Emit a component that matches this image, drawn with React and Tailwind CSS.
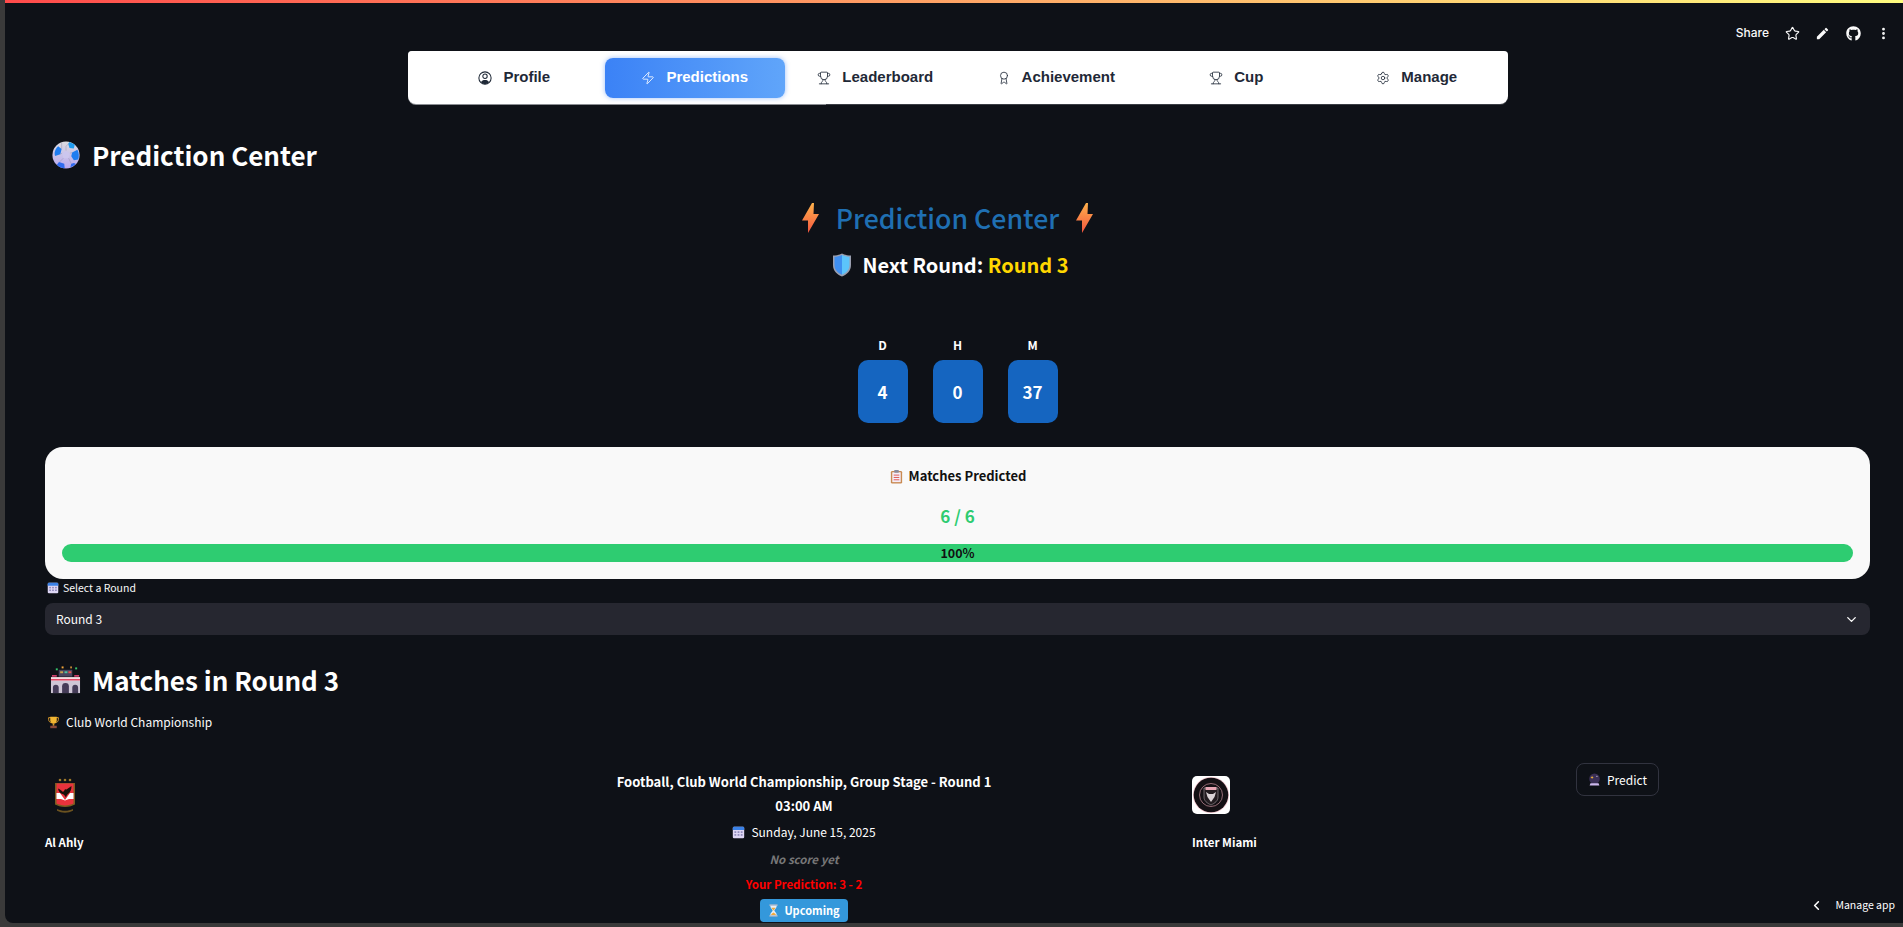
import React from "react";
import { Zap, Trophy, Award, Settings, Star, ChevronDown, ChevronLeft, EllipsisVertical } from "lucide-react";
import { FaGithub } from "react-icons/fa";
import { MdEdit } from "react-icons/md";

const Ball = ({ className }) => (
  <svg viewBox="0 0 32 32" className={className}>
    <defs>
      <linearGradient id="ballg" x1="0" y1="0" x2="0" y2="1">
        <stop offset="0" stopColor="#dcdce0" />
        <stop offset="1" stopColor="#b9a8f0" />
      </linearGradient>
    </defs>
    <circle cx="16" cy="16" r="15.500" fill="url(#ballg)" />
    <path d="M16 11l-4.500 3.200 1.700 5.400h5.600l1.700-5.400z" fill="#ccc6ee" />
    <path d="M7 6l4 3-1.500 6-6 2C2 13 4 9 7 6z" fill="#1f7df0" />
    <path d="M20 1l6 3-1 4.500-5-.5-1.500-5z" fill="#1f9cf0" />
    <path d="M23 13l6-3c2 3 2 8 1 11l-5 1-3-4.500z" fill="#1f7df0" />
    <path d="M8 24l6 2 .5 5c-3 0-6-1-9-4z" fill="#2f6bf0" />
    <path d="M22 26l3-1 2 1c-1.500 2-3 3-6 4z" fill="#2f6bf0" />
    <path d="M11 1.500L11 9M16 11v-5l3-3M11.500 14L9.500 15M20.500 14l2.500-1M13 19.600l-4.500 4.500M19 19.600l3 6.400" stroke="#8f8fa8" strokeWidth=".5" fill="none" />
  </svg>
);

const Bolt = ({ className, id }) => (
  <svg viewBox="0 0 17 30" className={className}>
    <defs>
      <linearGradient id={id} x1="0" y1="0" x2="0" y2="1">
        <stop offset="0" stopColor="#fdb14b" />
        <stop offset="1" stopColor="#f4553f" />
      </linearGradient>
    </defs>
    <path d="M10 0L0 17.500h6L6 30 17 11h-5.500L12 0z" fill={`url(#${id})`} />
  </svg>
);

const Shield = ({ className }) => (
  <svg viewBox="0 0 20 24" className={className}>
    <path d="M10 0.500C7 2 4 2.500 1 2.500V12c0 6 4 9.500 9 11.500 5-2 9-5.500 9-11.500V2.500C16 2.500 13 2 10 .5z" fill="#9a9fb0" />
    <path d="M10 2C7.500 3.200 5 3.700 2.500 3.800V12c0 5 3.500 8 7.500 9.800z" fill="#3f8ff0" />
    <path d="M10 2c2.500 1.200 5 1.700 7.500 1.800V12c0 5-3.500 8-7.500 9.800z" fill="#5cc4fb" />
  </svg>
);

const Calendar = ({ className }) => (
  <svg viewBox="0 0 16 16" className={className}>
    <rect x="1" y="1" width="14" height="14" rx="1.500" fill="#ded7f5" />
    <path d="M1 2.500A1.500 1.500 0 012.500 1h11A1.500 1.500 0 0115 2.500V5H1z" fill="#3b82e8" />
    <g fill="#8b86b8">
      <rect x="3" y="6.500" width="2.200" height="2" /><rect x="6.900" y="6.500" width="2.200" height="2" /><rect x="10.800" y="6.500" width="2.200" height="2" />
      <rect x="3" y="10" width="2.200" height="2" /><rect x="6.900" y="10" width="2.200" height="2" /><rect x="10.800" y="10" width="2.200" height="2" />
    </g>
  </svg>
);

const Clipboard = ({ className }) => (
  <svg viewBox="0 0 16 16" className={className}>
    <rect x="2" y="2" width="12" height="13.500" rx="1.500" fill="#c98a52" />
    <rect x="3.500" y="3.500" width="9" height="10.500" fill="#f4eef8" />
    <rect x="5.500" y="1" width="5" height="3" rx=".8" fill="#8a8a9c" />
    <g fill="#e0524f"><rect x="5" y="6" width="6" height="1" /><rect x="5" y="8.500" width="6" height="1" /><rect x="5" y="11" width="6" height="1" /></g>
  </svg>
);

const Stadium = ({ className }) => (
  <svg viewBox="0 0 32 28" className={className}>
    <g fill="#f0467a"><rect x="2" y="9" width="5" height="1.500" /><rect x="25" y="9" width="5" height="1.500" /></g>
    <g fill="#35c46a"><rect x="6" y="2" width="2" height="2" /><rect x="26" y="1" width="2" height="2" /></g>
    <g fill="#f2a53a"><rect x="12" y="0" width="2" height="2" /><rect x="21" y="0" width="1.500" height="2" /></g>
    <rect x="9" y="3.500" width="14" height="7" fill="#4a4560" />
    <g fill="#c9a24c"><rect x="10.500" y="5" width="3" height="2" /></g>
    <g fill="#4cc3a0"><rect x="15" y="5" width="3" height="2" /></g>
    <g fill="#e8524f"><rect x="19" y="5" width="3" height="2" /></g>
    <rect x="1" y="11" width="30" height="4" fill="#f2dde2" />
    <rect x="1" y="13" width="30" height="1.500" fill="#e0405f" />
    <rect x="1" y="15" width="30" height="12.500" fill="#cfc7d6" />
    <g fill="#453c58">
      <path d="M3 27.500V22a3 3 0 016 0v5.500z" /><path d="M12.500 27.500V20.500a3.500 3.500 0 017 0v7z" /><path d="M23 27.500V22a3 3 0 016 0v5.500z" />
    </g>
  </svg>
);

const Cup = ({ className }) => (
  <svg viewBox="0 0 16 16" className={className}>
    <path d="M2 2h12v2c0 2.500-1.500 4-3.500 4.200M2 2v2c0 2.500 1.500 4 3.500 4.200" stroke="#d99a2b" strokeWidth="1.200" fill="none" />
    <path d="M4 1h8v4.500C12 8 10 9.500 8 9.500S4 8 4 5.500z" fill="#f2b632" />
    <rect x="7" y="9" width="2" height="3" fill="#d99a2b" />
    <rect x="4" y="12" width="8" height="3" fill="#8a4a3a" />
  </svg>
);

const Hourglass = ({ className }) => (
  <svg viewBox="0 0 12 16" className={className}>
    <rect x="1" y="0.500" width="10" height="1.800" fill="#b9bcc9" />
    <rect x="1" y="13.700" width="10" height="1.800" fill="#b9bcc9" />
    <path d="M2 2.300h8c0 3-2.500 4-3 5.700.5 1.700 3 2.700 3 5.700H2c0-3 2.500-4 3-5.700-.5-1.700-3-2.700-3-5.700z" fill="#e9eef5" />
    <path d="M3.500 4.500h5C8 6 6.500 6.800 6 8 5.500 6.800 4 6 3.500 4.500zM3 13.500C3.500 12 5 11 6 10.500c1 .5 2.500 1.500 3 3z" fill="#f0a93a" />
  </svg>
);

const CrystalBall = ({ className }) => (
  <svg viewBox="0 0 16 16" className={className}>
    <circle cx="8" cy="7" r="6.500" fill="#3a2f55" />
    <path d="M5 3.500l.6 1.400L7 5.500l-1.400.6L5 7.500l-.6-1.400L3 5.500l1.400-.6z" fill="#f2b632" />
    <circle cx="11" cy="4" r=".7" fill="#fff" />
    <path d="M3 12.500h10l1 3H2z" fill="#cdb8ee" />
  </svg>
);

const ProfileIcon = ({ className }) => (
  <svg viewBox="0 0 16 16" className={className} fill="none">
    <circle cx="8" cy="8" r="7" stroke="currentColor" strokeWidth="1.200" />
    <circle cx="8" cy="6" r="2.500" stroke="currentColor" strokeWidth="1.200" />
    <path d="M3.300 12.800C4.300 10.900 6 10.200 8 10.200s3.700.7 4.700 2.600A7 7 0 018 15a7 7 0 01-4.700-2.200z" fill="currentColor" />
  </svg>
);

const AhlyLogo = ({ className }) => (
  <svg viewBox="0 0 22 36" className={className}>
    <g fill="#a07a2a"><circle cx="6" cy="2" r="1.300" /><circle cx="11" cy="2" r="1.300" /><circle cx="16" cy="2" r="1.300" /></g>
    <path d="M1 5h20v21.500c-2 1-6 2.500-10 2.500s-8-1.500-10-2.500z" fill="#7a5d20" />
    <path d="M2.500 5.500h17v20c-2 .8-5 2-8.500 2s-6.500-1.200-8.500-2z" fill="#e8323c" />
    <path d="M2.500 15h3.500l5 7 5-7h3.500v6h-4.500l-4 1.500-4-1.500h-4.500z" fill="#fff" />
    <path d="M4 10.500c2.300 1 3.800 2.200 5 3.500l1.300-1.500.7-1.200 1.500.2 5-3.500c0 3.500-1 6-3.500 8-.8.700-1.500 1.800-2 3.500-.8-1.500-1.800-2.500-2.800-3.200C6 15.500 4.500 13.500 4 10.500z" fill="#1c0f0a" />
    <path d="M3 31c2.500 1.200 5 1.800 8 1.800s5.500-.6 8-1.800v1.800c-2.500 1.300-5 1.900-8 1.900s-5.500-.6-8-1.900z" fill="#6b5220" />
  </svg>
);

const MiamiLogo = ({ className }) => (
  <svg viewBox="0 0 38 38" className={className}>
    <rect width="38" height="38" rx="5" fill="#fff" />
    <circle cx="19" cy="19" r="18" fill="#f3c6cf" />
    <circle cx="19" cy="19" r="17.300" fill="#141014" />
    <circle cx="19" cy="19" r="11.500" fill="none" stroke="#e8a6b4" strokeWidth=".6" />
    <path d="M12 12h14v9c0 4-3 6-7 8-4-2-7-4-7-8z" fill="#231c20" stroke="#bdb4b8" strokeWidth=".5" />
    <rect x="13.500" y="11" width="11" height="3" fill="#e8a6b4" />
    <path d="M14 16l3 2h4l3-2-1.500 5L19 26l-3.500-5z" fill="#d9d2d5" />
  </svg>
);

const navItems = [
  [ProfileIcon, "Profile"],
  [Zap, "Predictions", true],
  [Trophy, "Leaderboard"],
  [Award, "Achievement"],
  [Trophy, "Cup"],
  [Settings, "Manage"],
];

const sans = { fontFamily: '"Noto Sans CJK SC", "Noto Sans", sans-serif' };

export default function App() {
  return (
    <div className="h-[927px] w-[1903px] overflow-hidden bg-[#3a3a3a] pb-[4px] pl-[5px]" style={sans}>
      <div className="relative h-full overflow-hidden rounded-bl-[8px] bg-[#0e1117] text-white">
        <div className="h-[3px] bg-[linear-gradient(90deg,#ff4b4b,#fffd80)]" />

        <div className="absolute right-[12px] top-[23px] flex items-center gap-[15.500px] text-[#fafafa]">
          <span className="font-['Inter',sans-serif] text-[12px] font-medium leading-[20px]">Share</span>
          <Star className="h-[15px] w-[15px]" strokeWidth={1.800} />
          <MdEdit className="h-[15px] w-[15px]" />
          <FaGithub className="h-[15px] w-[15px]" />
          <EllipsisVertical className="h-[15px] w-[15px]" strokeWidth={2.500} />
        </div>

        <div className="ml-[403px] mt-[48px] h-[54px] w-[1100px] rounded-b-[8px] rounded-t-[4px] bg-[linear-gradient(90deg,#8a8d92_38%,#3a3d44_38%)] pb-px">
          <div className="flex h-full items-center rounded-b-[8px] rounded-t-[4px] bg-white pl-[16px] font-['Liberation_Sans',sans-serif]">
            {navItems.map(([Icon, label, active]) => (
              <div
                key={label}
                className={
                  active
                    ? "flex h-[40px] w-[180.500px] items-center justify-center gap-[11px] rounded-[8px] bg-[linear-gradient(90deg,#3b82f6,#60a5fa)] text-[15px] font-bold text-white shadow-[0_0_5px_rgba(59,130,246,0.5)]"
                    : "flex h-[40px] w-[180.500px] items-center justify-center gap-[11px] text-[15px] font-bold text-[#1f2937]"
                }
              >
                <Icon className="h-[14px] w-[14px]" strokeWidth={1.400} />
                <span>{label}</span>
              </div>
            ))}
          </div>
        </div>

        <div className="ml-[40px] mr-[33px]">
          <div className="mt-[27px] flex h-[46px] items-center">
            <Ball className="ml-[7px] h-[28px] w-[28px] shrink-0" />
            <h1 className="ml-[12px] text-[26px] font-semibold leading-[40px]">Prediction Center</h1>
          </div>

          <div className="mt-[18px] flex h-[44px] items-center justify-center pr-[20px]">
            <Bolt id="b1" className="h-[30px] w-[17px]" />
            <span className="mx-[17px] text-[26.700px] font-medium leading-[40px] text-[#1f6fb2]">Prediction Center</span>
            <Bolt id="b2" className="h-[30px] w-[17px]" />
          </div>
          <div className="mt-[5px] flex h-[40px] items-center justify-center pr-[15px]">
            <Shield className="h-[24px] w-[20px]" />
            <span className="ml-[11px] text-[20px] font-semibold leading-[32px]">
              Next Round: <span className="text-[#ffd700]">Round 3</span>
            </span>
          </div>

          <div className="mt-[50px] flex justify-center gap-[25px]">
            {[["D", "4"], ["H", "0"], ["M", "37"]].map(([l, v]) => (
              <div key={l} className="flex w-[50px] flex-col items-center">
                <span className="h-[25px] text-[12px] font-bold leading-[20px]">{l}</span>
                <div className="flex h-[63px] w-[50px] items-center justify-center rounded-[10px] bg-[#1565c0] text-[17px] font-bold">{v}</div>
              </div>
            ))}
          </div>

          <div className="mt-[24px] h-[132px] rounded-[18px] bg-[#f9f9f9] px-[17px] pt-[17px] text-center">
            <div className="flex h-[24px] items-center justify-center gap-[5px] text-[13px] font-semibold text-[#111]">
              <Clipboard className="h-[15px] w-[15px]" />
              <span>Matches Predicted</span>
            </div>
            <div className="mt-[14px] h-[28px] text-[17px] font-bold leading-[28px] text-[#2ecc71]">6 / 6</div>
            <div className="mt-[14px] flex h-[18px] items-center justify-center rounded-[9px] bg-[#2ecc71] text-[12.500px] font-semibold text-[#111]">100%</div>
          </div>

          <div className="flex h-[18px] items-center gap-[4px] pl-[2px] text-[10.500px] leading-[18px] text-[#fafafa]">
            <Calendar className="h-[12px] w-[12px]" />
            <span>Select a Round</span>
          </div>
          <div className="mt-[6px] flex h-[32px] items-center justify-between rounded-[8px] bg-[#262730] pl-[11px] pr-[11px] text-[12px] text-[#fafafa]">
            <span>Round 3</span>
            <ChevronDown className="h-[15px] w-[15px]" strokeWidth={2.200} />
          </div>

          <div className="mt-[22px] flex h-[46px] items-center">
            <Stadium className="ml-[5px] h-[28px] w-[31px] shrink-0" />
            <h2 className="ml-[11px] text-[26px] font-semibold leading-[40px]">Matches in Round 3</h2>
          </div>
          <div className="mt-[9px] flex h-[20px] items-center gap-[6px] pl-[2px] text-[12px] text-[#fafafa]">
            <Cup className="h-[13px] w-[13px]" />
            <span>Club World Championship</span>
          </div>

          <div className="mt-[31px] grid grid-cols-[371px_744px_368px_1fr] gap-[16px]">
            <div className="pt-[15px]">
              <AhlyLogo className="ml-[9px] h-[36px] w-[22px]" />
              <div className="mt-[18px] text-[11.500px] font-bold leading-[20px]">Al Ahly</div>
            </div>
            <div className="flex flex-col items-center pt-[7px] text-center">
              <div className="h-[24px] text-[13px] font-bold leading-[24px]">Football, Club World Championship, Group Stage - Round 1</div>
              <div className="h-[24px] text-[13px] font-bold leading-[24px]">03:00 AM</div>
              <div className="mt-[1px] flex h-[26px] items-center gap-[6px] text-[12px]">
                <Calendar className="h-[13px] w-[13px]" />
                <span>Sunday, June 15, 2025</span>
              </div>
              <div className="mt-[1px] h-[25px] text-[11.500px] font-bold italic leading-[26px] text-[#777]">No score yet</div>
              <div className="h-[26px] text-[11.500px] font-bold leading-[26px] text-[#ff0000]">Your Prediction: 3 - 2</div>
              <div className="mt-[2px] flex h-[23px] w-[88px] items-center justify-center gap-[5px] rounded-[4px] bg-[#3498db] text-[11px] font-bold">
                <Hourglass className="h-[13px] w-[11px]" />
                <span>Upcoming</span>
              </div>
            </div>
            <div className="pt-[13px]">
              <MiamiLogo className="h-[38px] w-[38px]" />
              <div className="mt-[18px] text-[11.500px] font-bold leading-[20px]">Inter Miami</div>
            </div>
            <div>
              <div className="flex h-[33px] w-[83px] items-center justify-center gap-[6px] rounded-[8px] border border-[#31333f] text-[12px]">
                <CrystalBall className="h-[13px] w-[13px]" />
                <span>Predict</span>
              </div>
            </div>
          </div>
        </div>

        <div className="absolute bottom-[8px] right-[8px] flex items-center">
          <ChevronLeft className="mr-[11px] h-[15px] w-[15px]" strokeWidth={2.500} />
          <span className="text-[10.500px] leading-[20px]">Manage app</span>
        </div>
      </div>
    </div>
  );
}
